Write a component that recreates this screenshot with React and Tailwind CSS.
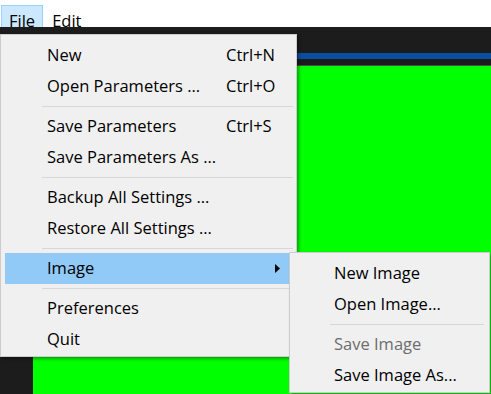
const mainMenu = [
  { label: 'New', shortcut: 'Ctrl+N' },
  { label: 'Open Parameters ...', shortcut: 'Ctrl+O' },
  { sep: true },
  { label: 'Save Parameters', shortcut: 'Ctrl+S' },
  { label: 'Save Parameters As ...' },
  { sep: true },
  { label: 'Backup All Settings ...' },
  { label: 'Restore All Settings ...' },
  { sep: true },
  { label: 'Image', submenu: true, active: true },
  { sep: true },
  { label: 'Preferences' },
  { label: 'Quit' },
];

const imageMenu = [
  { label: 'New Image' },
  { label: 'Open Image...' },
  { sep: true },
  { label: 'Save Image', disabled: true },
  { label: 'Save Image As...' },
];

const font = { fontFamily: '"Open Sans", "Noto Sans", sans-serif' };

function MainMenu() {
  return (
    <div className="absolute left-0 top-[34px] w-[297px] border border-[#cccccc] bg-[#f0f0f0] pt-[5px] pb-[1px] shadow-[2px_2px_3px_rgba(0,0,0,0.35)]">
      {mainMenu.map((item, i) =>
        item.sep ? (
          <div key={i} className="flex h-[9px] items-center pl-[41px] pr-[3px]">
            <div className="h-px w-full bg-[#d7d7d7]" />
          </div>
        ) : (
          <div
            key={i}
            className={
              'relative flex h-[31px] items-center ' +
              (item.active ? 'ml-[4px] mr-[7px] bg-[#91c9f7] pl-[42px]' : 'pl-[46px]')
            }
          >
            <span className="w-[179px] whitespace-nowrap">{item.label}</span>
            {item.shortcut && <span className="whitespace-nowrap">{item.shortcut}</span>}
            {item.submenu && (
              <svg className="absolute left-[270px] top-[11px]" width="5" height="9" viewBox="0 0 5 9">
                <path d="M0 0 L5 4.5 L0 9 Z" fill="#000" />
              </svg>
            )}
          </div>
        )
      )}
    </div>
  );
}

function ImageMenu() {
  return (
    <div className="absolute left-[289px] top-[252px] w-[201px] border border-[#cccccc] bg-[#f0f0f0] pt-[5px] pb-[1px] shadow-[2px_2px_3px_rgba(0,0,0,0.3)]">
      {imageMenu.map((item, i) =>
        item.sep ? (
          <div key={i} className="flex h-[9px] items-center pl-[40px] pr-[5px]">
            <div className="h-px w-full bg-[#d7d7d7]" />
          </div>
        ) : (
          <div
            key={i}
            className={'flex h-[31px] items-center whitespace-nowrap pl-[44px] ' + (item.disabled ? 'text-[#6d6d6d]' : '')}
          >
            {item.label}
          </div>
        )
      )}
    </div>
  );
}

export default function App() {
  return (
    <div className="relative h-[394px] w-[491px] overflow-hidden bg-[#1c1c1c] text-[16.5px] text-black" style={font}>
      <div className="flex h-[27px] items-start bg-white pt-[5px]">
        <div className="ml-[1px] h-[22px] border border-b-0 border-[#99d1ff] bg-[#cce8ff] pt-[4px] pl-[7px] pr-[7px] leading-[22px]">File</div>
        <div className="pt-[5px] pl-[9px] leading-[22px]">Edit</div>
      </div>
      <div className="relative flex h-[39px] flex-col bg-[#1c1c1c]">
        <div className="h-[26px]" />
        <div className="h-[6px] bg-[#0a4ea2]" />
        <div className="h-[6px]" />
        <div className="h-px bg-[#4a4a4a]" />
      </div>
      <div className="relative flex h-[328px]">
        <div className="w-[33px] bg-[#1c1c1c]" />
        <div className="flex-1 bg-[#00ff00]" />
      </div>
      <MainMenu />
      <ImageMenu />
    </div>
  );
}
